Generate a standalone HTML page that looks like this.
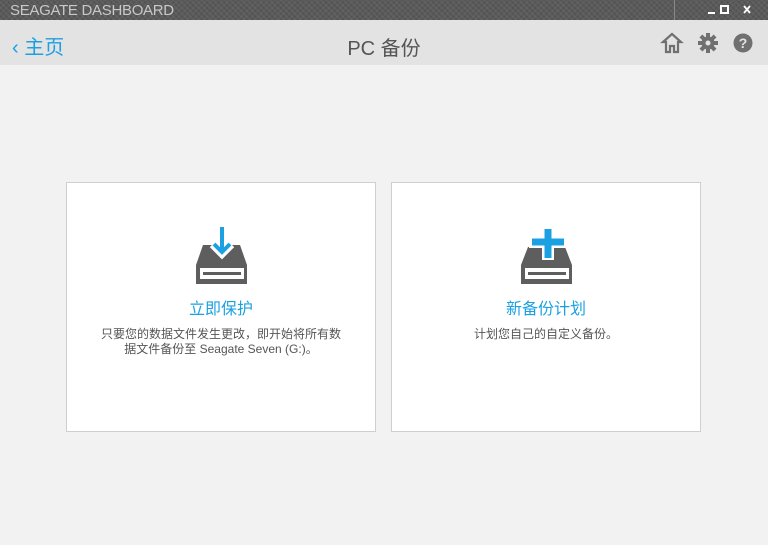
<!DOCTYPE html>
<html><head><meta charset="utf-8"><style>
body{margin:0;width:768px;height:545px;overflow:hidden;background:#f2f2f2;font-family:"Liberation Sans","Noto Sans CJK SC",sans-serif;position:relative}
.tb{position:absolute;left:0;top:0;width:768px;height:20px;background:#5a5a5a;background-image:repeating-linear-gradient(45deg,rgba(255,255,255,.05) 0 2px,transparent 2px 4px),repeating-linear-gradient(-45deg,rgba(0,0,0,.08) 0 2px,transparent 2px 4px)}
.tb .t{position:absolute;left:10px;top:2px;color:#c8c8c8;font-size:15px;letter-spacing:-0.3px}
.tb .sep{position:absolute;left:674px;top:0;width:1px;height:20px;background:#888}
.hd{position:absolute;left:0;top:20px;width:768px;height:45px;background:#e3e3e3}
.back{position:absolute;left:12px;top:31px;color:#1ba1e2;font-size:20px}
.title{position:absolute;left:0;width:768px;text-align:center;top:32px;color:#555;font-size:20px}
.card{position:absolute;top:182px;width:308px;height:248px;background:#fff;border:1px solid #cfcfcf}
.card h2{position:absolute;top:112px;left:0;width:100%;text-align:center;margin:0;font-weight:normal;font-size:16px;color:#1ba1e2}
.card p{position:absolute;top:144px;left:0;width:100%;text-align:center;margin:0;font-size:12px;line-height:15px;color:#555}
.ic{position:absolute;top:222px}
</style></head><body>
<div class="tb"><div class="t">SEAGATE DASHBOARD</div><div class="sep"></div>
<svg style="position:absolute;left:700px;top:4px" width="60" height="12"><rect x="8" y="8" width="7" height="2" fill="#fff"/><rect x="21" y="2" width="7" height="7" fill="none" stroke="#fff" stroke-width="2"/><path d="M44 2l6 7M50 2l-6 7" stroke="#fff" stroke-width="1.8"/></svg></div>
<div class="hd"></div>
<div class="back">&#8249; 主页</div>
<div class="title">PC 备份</div>
<svg style="position:absolute;left:660px;top:32px" width="96" height="22">
<path d="M3 10L12 2 21 10H18V20H14V14H10V20H6V10Z" fill="none" stroke="#707070" stroke-width="2.2"/>
<g transform="translate(48,11)" fill="#707070"><circle r="6.5"/><g id="t"><rect x="-2" y="-10" width="4" height="20"/><rect x="-10" y="-2" width="20" height="4"/></g><use href="#t" transform="rotate(45)"/><circle r="2.5" fill="#e3e3e3"/></g>
<circle cx="83" cy="11" r="9.5" fill="#707070"/><text x="83" y="16" text-anchor="middle" font-size="14" font-weight="bold" fill="#e3e3e3" font-family="Liberation Sans">?</text>
</svg>
<div class="card" style="left:66px">
<h2>立即保护</h2>
<p>只要您的数据文件发生更改，即开始将所有数<br>据文件备份至 Seagate Seven (G:)。</p>
</div>
<div class="card" style="left:391px">
<h2>新备份计划</h2>
<p>计划您自己的自定义备份。</p>
</div>
<svg class="ic" style="left:190px" width="64" height="64">
<path d="M13 23H50L57 43V62H6V43Z" fill="#5e5e5e"/>
<path d="M32 4V31M23 22L32 31 41 22" fill="none" stroke="#fff" stroke-width="9"/>
<path d="M32 5V30M24 22L32 30 40 22" fill="none" stroke="#1ba1e2" stroke-width="4"/>
<rect x="10" y="46" width="44" height="11" fill="#fff"/><rect x="13" y="50" width="38" height="3" fill="#5e5e5e"/>
</svg>
<svg class="ic" style="left:515px" width="64" height="64">
<path d="M13 25H50L57 43V62H6V43Z" fill="#5e5e5e"/>
<path d="M33 4V38M14 20H51" fill="none" stroke="#fff" stroke-width="12"/>
<path d="M33 7V36M17 20H49" fill="none" stroke="#1ba1e2" stroke-width="7"/>
<rect x="10" y="46" width="44" height="11" fill="#fff"/><rect x="13" y="50" width="38" height="3" fill="#5e5e5e"/>
</svg>
</body></html>
